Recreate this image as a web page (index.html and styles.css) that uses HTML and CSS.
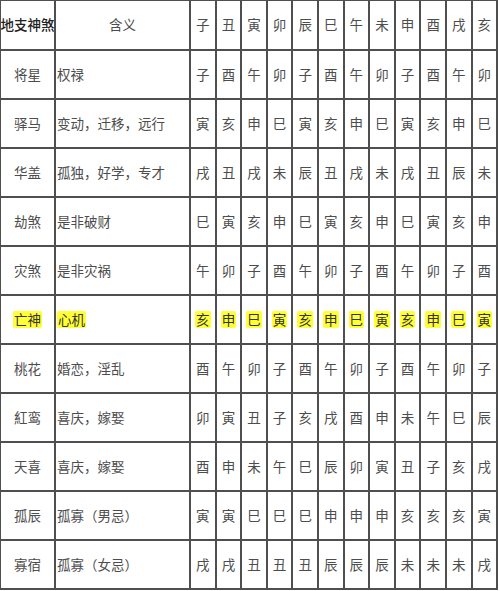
FILE: index.html
```html
<!DOCTYPE html>
<html lang="zh">
<head>
<meta charset="utf-8">
<title>地支神煞</title>
<link rel="stylesheet" href="styles.css">
</head>
<body>
<div class="table">
  <div class="cell name head">地支神煞</div><div class="cell mean center">含义</div>
  <div class="cell">子</div><div class="cell">丑</div><div class="cell">寅</div><div class="cell">卯</div><div class="cell">辰</div><div class="cell">巳</div><div class="cell">午</div><div class="cell">未</div><div class="cell">申</div><div class="cell">酉</div><div class="cell">戌</div><div class="cell">亥</div>

  <div class="cell name">将星</div><div class="cell mean">权禄</div>
  <div class="cell">子</div><div class="cell">酉</div><div class="cell">午</div><div class="cell">卯</div><div class="cell">子</div><div class="cell">酉</div><div class="cell">午</div><div class="cell">卯</div><div class="cell">子</div><div class="cell">酉</div><div class="cell">午</div><div class="cell">卯</div>

  <div class="cell name">驿马</div><div class="cell mean">变动，迁移，远行</div>
  <div class="cell">寅</div><div class="cell">亥</div><div class="cell">申</div><div class="cell">巳</div><div class="cell">寅</div><div class="cell">亥</div><div class="cell">申</div><div class="cell">巳</div><div class="cell">寅</div><div class="cell">亥</div><div class="cell">申</div><div class="cell">巳</div>

  <div class="cell name">华盖</div><div class="cell mean">孤独，好学，专才</div>
  <div class="cell">戌</div><div class="cell">丑</div><div class="cell">戌</div><div class="cell">未</div><div class="cell">辰</div><div class="cell">丑</div><div class="cell">戌</div><div class="cell">未</div><div class="cell">戌</div><div class="cell">丑</div><div class="cell">辰</div><div class="cell">未</div>

  <div class="cell name">劫煞</div><div class="cell mean">是非破财</div>
  <div class="cell">巳</div><div class="cell">寅</div><div class="cell">亥</div><div class="cell">申</div><div class="cell">巳</div><div class="cell">寅</div><div class="cell">亥</div><div class="cell">申</div><div class="cell">巳</div><div class="cell">寅</div><div class="cell">亥</div><div class="cell">申</div>

  <div class="cell name">灾煞</div><div class="cell mean">是非灾祸</div>
  <div class="cell">午</div><div class="cell">卯</div><div class="cell">子</div><div class="cell">酉</div><div class="cell">午</div><div class="cell">卯</div><div class="cell">子</div><div class="cell">酉</div><div class="cell">午</div><div class="cell">卯</div><div class="cell">子</div><div class="cell">酉</div>

  <div class="cell name hl"><span class="mark">亡神</span></div><div class="cell mean hl"><span class="mark">心机</span></div>
  <div class="cell hl"><span class="mark">亥</span></div><div class="cell hl"><span class="mark">申</span></div><div class="cell hl"><span class="mark">巳</span></div><div class="cell hl"><span class="mark">寅</span></div><div class="cell hl"><span class="mark">亥</span></div><div class="cell hl"><span class="mark">申</span></div><div class="cell hl"><span class="mark">巳</span></div><div class="cell hl"><span class="mark">寅</span></div><div class="cell hl"><span class="mark">亥</span></div><div class="cell hl"><span class="mark">申</span></div><div class="cell hl"><span class="mark">巳</span></div><div class="cell hl"><span class="mark">寅</span></div>

  <div class="cell name">桃花</div><div class="cell mean">婚恋，淫乱</div>
  <div class="cell">酉</div><div class="cell">午</div><div class="cell">卯</div><div class="cell">子</div><div class="cell">酉</div><div class="cell">午</div><div class="cell">卯</div><div class="cell">子</div><div class="cell">酉</div><div class="cell">午</div><div class="cell">卯</div><div class="cell">子</div>

  <div class="cell name">紅鸾</div><div class="cell mean">喜庆，嫁娶</div>
  <div class="cell">卯</div><div class="cell">寅</div><div class="cell">丑</div><div class="cell">子</div><div class="cell">亥</div><div class="cell">戌</div><div class="cell">酉</div><div class="cell">申</div><div class="cell">未</div><div class="cell">午</div><div class="cell">巳</div><div class="cell">辰</div>

  <div class="cell name">天喜</div><div class="cell mean">喜庆，嫁娶</div>
  <div class="cell">酉</div><div class="cell">申</div><div class="cell">未</div><div class="cell">午</div><div class="cell">巳</div><div class="cell">辰</div><div class="cell">卯</div><div class="cell">寅</div><div class="cell">丑</div><div class="cell">子</div><div class="cell">亥</div><div class="cell">戌</div>

  <div class="cell name">孤辰</div><div class="cell mean">孤寡（男忌）</div>
  <div class="cell">寅</div><div class="cell">寅</div><div class="cell">巳</div><div class="cell">巳</div><div class="cell">巳</div><div class="cell">申</div><div class="cell">申</div><div class="cell">申</div><div class="cell">亥</div><div class="cell">亥</div><div class="cell">亥</div><div class="cell">寅</div>

  <div class="cell name">寡宿</div><div class="cell mean">孤寡（女忌）</div>
  <div class="cell">戌</div><div class="cell">戌</div><div class="cell">丑</div><div class="cell">丑</div><div class="cell">丑</div><div class="cell">辰</div><div class="cell">辰</div><div class="cell">辰</div><div class="cell">未</div><div class="cell">未</div><div class="cell">未</div><div class="cell">戌</div>
</div>
</body>
</html>
```

FILE: styles.css
```css
html, body {
  margin: 0;
  padding: 0;
  background: #ffffff;
}

body {
  font-family: "Noto Sans CJK SC", "Noto Sans", sans-serif;
  font-size: 13.5px;
  color: #4d4d4d;
}

.table {
  display: grid;
  width: 498.2px;
  box-sizing: border-box;
  grid-template-columns: 53px 133px repeat(12, 23.6px);
  grid-template-rows: 48px repeat(11, 47px);
  gap: 2px;
  padding: 1px 2px 2px 1px;
  background: #4f4f4f;
}

.cell {
  background: #ffffff;
  display: flex;
  align-items: center;
  justify-content: center;
  overflow: hidden;
  white-space: nowrap;
  line-height: 1;
}

.mean {
  justify-content: flex-start;
  padding-left: 1px;
}

.mean.center {
  justify-content: center;
  padding-left: 0;
}

.head {
  color: #222222;
  font-weight: 500;
  justify-content: center;
}

.hl {
  color: #333333;
}

.mark {
  background: #ffff33;
  padding: 2px 1px;
  border-radius: 2px;
}
```
